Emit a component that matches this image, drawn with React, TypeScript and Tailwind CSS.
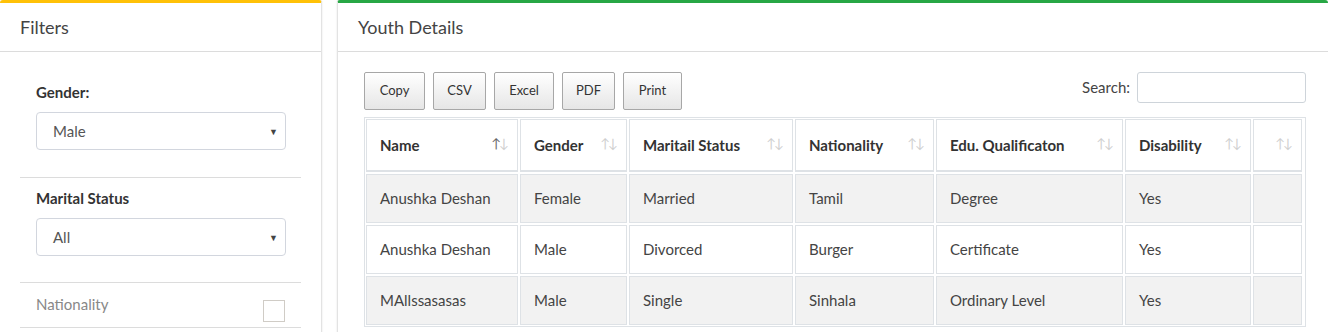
import React from "react";

const font = { fontFamily: "Lato, 'Noto Sans', sans-serif" };

function SortIcon({ active }: { active?: boolean }) {
  return (
    <span className="absolute right-[8px] top-1/2 -translate-y-[62%] flex text-[13px] font-normal leading-none select-none">
      <span className={active ? "text-[#666]" : "text-[#cfcfcf]"}>↑</span>
      <span className="text-[#cfcfcf] -ml-[2px]">↓</span>
    </span>
  );
}

function Select({ value }: { value: string }) {
  return (
    <div className="relative h-[38px] w-[250px] rounded-[4px] border border-[#d2d6de] bg-white flex items-center pl-[16px] text-[15px] text-[#555]">
      {value}
      <span className="absolute right-[7px] top-[12px] text-[9px] text-[#444]">▼</span>
    </div>
  );
}

const cols = [
  { name: "Name", w: 152, active: true },
  { name: "Gender", w: 107 },
  { name: "Maritail Status", w: 164 },
  { name: "Nationality", w: 139 },
  { name: "Edu. Qualificaton", w: 187 },
  { name: "Disability", w: 126 },
  { name: "", w: 49 },
];

const rows = [
  ["Anushka Deshan", "Female", "Married", "Tamil", "Degree", "Yes", ""],
  ["Anushka Deshan", "Male", "Divorced", "Burger", "Certificate", "Yes", ""],
  ["MAllssasasas", "Male", "Single", "Sinhala", "Ordinary Level", "Yes", ""],
];

const buttons = [
  { t: "Copy", w: 61 },
  { t: "CSV", w: 53 },
  { t: "Excel", w: 60 },
  { t: "PDF", w: 53 },
  { t: "Print", w: 59 },
];

export default function App() {
  return (
    <div style={font} className="w-[1328px] h-[332px] overflow-hidden bg-white flex gap-[15px]">
      {/* Filters panel */}
      <div className="w-[322px] shrink-0 h-[340px] border-t-[3px] border-t-[#ffc107] rounded-t-[3px] border-r border-r-[#e3e3e3] shadow-[0_0_2px_rgba(0,0,0,0.12)] bg-white">
        <div className="h-[49px] border-b border-[#dcdcdc] flex items-center px-[20px] text-[18px] text-[#444]">
          Filters
        </div>
        <div className="px-[20px]">
          <div className="px-[16px] pt-[30px] pb-[27px] border-b border-[#dcdcdc]">
            <div className="text-[15px] font-bold text-[#333] leading-[20px] mb-[10px]">Gender:</div>
            <Select value="Male" />
          </div>
          <div className="px-[16px] pt-[10px] pb-[26px] border-b border-[#dcdcdc]">
            <div className="text-[15px] font-bold text-[#333] leading-[20px] mb-[10px]">Marital Status</div>
            <Select value="All" />
          </div>
          <div className="pl-[16px] pr-[16px] h-[45px] border-b border-[#dcdcdc] flex items-start justify-between pt-[11px]">
            <span className="text-[15px] text-[#888] leading-[20px]">Nationality</span>
            <span className="mt-[6px] w-[22px] h-[22px] border border-[#d0ccc6] bg-white block"></span>
          </div>
        </div>
      </div>

      {/* Youth Details panel */}
      <div className="flex-1 h-[340px] border-t-[3px] border-t-[#28a745] rounded-t-[3px] border-l border-l-[#e3e3e3] shadow-[0_0_2px_rgba(0,0,0,0.12)] bg-white">
        <div className="h-[49px] border-b border-[#dcdcdc] flex items-center px-[20px] text-[18px] text-[#444]">
          Youth Details
        </div>
        <div className="pl-[26px] pr-[22px] pt-[20px]">
          <div className="flex justify-between items-start h-[45px]">
            <div className="flex gap-[8px]">
              {buttons.map((b) => (
                <div
                  key={b.t}
                  style={{ width: b.w }}
                  className="h-[38px] rounded-[2px] border border-[#a7a7a7] bg-gradient-to-b from-white to-[#e6e6e6] flex items-center justify-center text-[13px] text-[#333]"
                >
                  {b.t}
                </div>
              ))}
            </div>
            <div className="flex items-center gap-[7px]">
              <span className="text-[15px] text-[#444]">Search:</span>
              <div className="w-[169px] h-[31px] rounded-[3px] border border-[#ced4da] bg-white"></div>
            </div>
          </div>
          <div className="w-[942px] border border-[#dee2e6]">
            <table className="border-separate table-fixed -m-[1px]" style={{ borderSpacing: "2px" }}>
              <thead>
                <tr>
                  {cols.map((c, i) => (
                    <th
                      key={i}
                      style={{ width: c.w }}
                      className="relative h-[53px] border border-[#dee2e6] border-b-2 text-left align-middle pl-[13px] text-[15px] font-bold text-[#333]"
                    >
                      {c.name}
                      <SortIcon active={c.active} />
                    </th>
                  ))}
                </tr>
              </thead>
              <tbody>
                {rows.map((r, ri) => (
                  <tr key={ri} className={ri % 2 === 0 ? "bg-[#f2f2f2]" : "bg-white"}>
                    {r.map((v, ci) => (
                      <td
                        key={ci}
                        className="h-[49px] border border-[#dee2e6] pl-[13px] text-[15px] text-[#444] align-middle"
                      >
                        {v}
                      </td>
                    ))}
                  </tr>
                ))}
              </tbody>
            </table>
          </div>
        </div>
      </div>
    </div>
  );
}
